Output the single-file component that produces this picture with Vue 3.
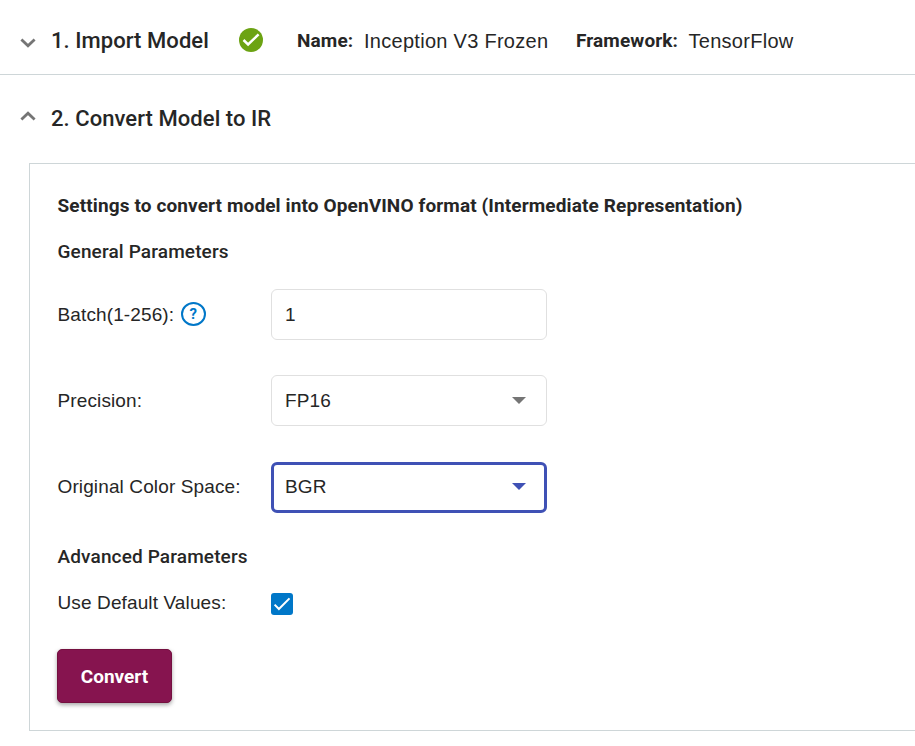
<script setup>
import { ref } from 'vue'

const batch = ref('1')
const useDefaults = ref(true)
const selects = [
  { label: 'Precision:', value: 'FP16', focused: false },
  { label: 'Original Color Space:', value: 'BGR', focused: true },
]
</script>

<template>
  <main class="page">
    <header class="step step-import">
      <svg class="chevron" viewBox="0 0 16 10"><path d="M1.4 1.4 8 7.7l6.6-6.3" /></svg>
      <h2 class="step-title">1. Import Model</h2>
      <svg class="done" viewBox="0 0 24 24">
        <circle cx="12" cy="12" r="12" />
        <path d="m4.5 12 4.6 4.4L19.6 6.4" />
      </svg>
      <span class="key key-name">Name:</span>
      <span class="info info-name">Inception V3 Frozen</span>
      <span class="key key-framework">Framework:</span>
      <span class="info">TensorFlow</span>
    </header>

    <header class="step step-convert">
      <svg class="chevron" viewBox="0 0 16 10"><path d="M1.4 8.6 8 2.3l6.6 6.3" /></svg>
      <h2 class="step-title">2. Convert Model to IR</h2>
    </header>

    <section class="panel">
      <h3 class="heading heading-main">Settings to convert model into OpenVINO format (Intermediate Representation)</h3>
      <h3 class="heading heading-general">General Parameters</h3>

      <div class="row">
        <div class="label">
          <span>Batch(1-256):</span>
          <span class="help">?</span>
        </div>
        <input v-model="batch" class="field" type="text" />
      </div>

      <div v-for="item in selects" :key="item.label" class="row">
        <div class="label"><span>{{ item.label }}</span></div>
        <div class="field select" :class="{ focused: item.focused }">
          <span>{{ item.value }}</span>
          <i class="arrow"></i>
        </div>
      </div>

      <h3 class="heading heading-advanced">Advanced Parameters</h3>

      <div class="row row-check">
        <div class="label"><span>Use Default Values:</span></div>
        <button class="checkbox" type="button" @click="useDefaults = !useDefaults">
          <svg v-if="useDefaults" viewBox="0 0 22 22"><path d="m3.6 11.6 4.3 4.4L18.5 5.4" /></svg>
        </button>
      </div>

      <button class="convert" type="button">Convert</button>
    </section>
  </main>
</template>

<style>
body {
  background: #fff;
}
</style>

<style scoped>
.page {
  height: 746px;
  overflow: hidden;
  color: #262626;
  font-family: "Liberation Sans", Arial, sans-serif;
  font-size: 19px;
}

.step {
  display: flex;
  align-items: center;
  box-sizing: border-box;
  padding-left: 20px;
}

.step-import {
  height: 75px;
  padding-top: 8px;
  border-bottom: 1px solid #ced6d8;
}

.step-convert {
  height: 88px;
}

.chevron {
  flex: none;
  width: 16px;
  height: 10px;
  margin: 4px 15px 0 0;
  fill: none;
  stroke: #757575;
  stroke-width: 2.8;
}

.step-convert .chevron {
  margin-top: -7px;
}

.step-title {
  margin: 0;
  width: 187.5px;
  font: 500 22px/30px Roboto, sans-serif;
  letter-spacing: 0.06px;
  white-space: nowrap;
}

.done {
  flex: none;
  width: 24px;
  height: 24px;
  margin: -2px 34.5px 0 0;
  fill: #6ca313;
}

.done path {
  fill: none;
  stroke: #fff;
  stroke-width: 2.5;
}

.key {
  flex: none;
  font: 700 19px/26px Roboto, sans-serif;
  letter-spacing: 0.12px;
}

.key-name {
  width: 67px;
}

.key-framework {
  width: 112.5px;
}

.info {
  flex: none;
  font-size: 20px;
  line-height: 26px;
  letter-spacing: 0.28px;
}

.info-name {
  width: 212px;
}

.panel {
  box-sizing: border-box;
  width: 900px;
  height: 568px;
  margin-left: 29px;
  padding: 29px 27px;
  border: 1px solid #ced6d8;
}

.heading {
  margin: 0;
  padding-left: 0.5px;
  font: 500 19px/26px Roboto, sans-serif;
  letter-spacing: 0.14px;
  white-space: nowrap;
}

.heading-main {
  font-weight: 700;
  letter-spacing: 0.12px;
}

.heading-general {
  margin: 20px 0 24px;
}

.row {
  display: flex;
  align-items: center;
  height: 51px;
  margin-bottom: 35px;
}

.label {
  display: flex;
  align-items: center;
  box-sizing: border-box;
  width: 214px;
  padding-left: 0.5px;
  letter-spacing: 0.12px;
  white-space: nowrap;
}

.help {
  display: flex;
  align-items: center;
  justify-content: center;
  box-sizing: border-box;
  width: 25px;
  height: 24px;
  margin: -2px 0 0 6.5px;
  border: 2px solid #0077c8;
  border-radius: 50%;
  color: #0077c8;
  font: 700 15px/20px Roboto, sans-serif;
}

.field {
  box-sizing: border-box;
  width: 276px;
  height: 51px;
  padding: 0 20px 0 13px;
  border: 1px solid #e0e0e0;
  border-radius: 6px;
  outline: none;
  background: #fff;
  color: #262626;
  font: 19px "Liberation Sans", Arial, sans-serif;
  letter-spacing: 0.12px;
}

.select {
  display: flex;
  align-items: center;
  justify-content: space-between;
}

.arrow {
  border: 7px solid transparent;
  border-top-color: #757575;
  border-bottom: 0;
}

.focused {
  margin-top: 2px;
  padding: 0 18px 2px 11px;
  border: 3px solid #3f51b5;
}

.focused .arrow {
  border-top-color: #3f51b5;
}

.heading-advanced {
  margin: -3px 0 20px;
}

.row-check {
  height: 26px;
  margin-bottom: 33px;
}

.row-check .checkbox {
  margin-top: 2px;
}

.checkbox {
  width: 22px;
  height: 22px;
  padding: 0;
  border: 0;
  border-radius: 3px;
  background: #0077c8;
}

.checkbox svg {
  display: block;
  fill: none;
  stroke: #fff;
  stroke-width: 2;
}

.convert {
  display: block;
  width: 115px;
  height: 54px;
  padding: 1px 0 0;
  border: 1px solid #74103f;
  border-radius: 5px;
  background: #86144f;
  box-shadow: 0 2px 4px rgba(0, 0, 0, 0.35);
  color: #fff;
  font: 700 19px/26px Roboto, sans-serif;
}
</style>
